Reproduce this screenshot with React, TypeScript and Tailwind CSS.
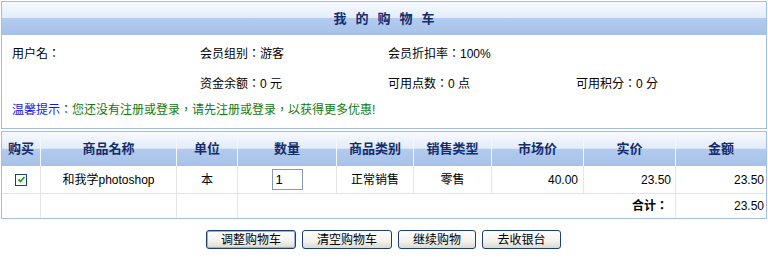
import React from "react";

const font = { fontFamily: '"Liberation Sans", "Noto Sans CJK TC", "Noto Sans CJK SC", sans-serif' };

function Check() {
  return (
    <span className="inline-flex h-[12px] w-[12px] items-center justify-center border border-[#1c3c78] bg-white">
      <svg width="9" height="9" viewBox="0 0 9 9">
        <path d="M1.5 4.5 L3.5 6.5 L7.5 2" stroke="#21a121" strokeWidth="1.8" fill="none" />
      </svg>
    </span>
  );
}

const headerBg =
  "bg-[linear-gradient(to_bottom,#f7faff_0%,#e3ecf9_48%,#b3cbee_50%,#a6c1e9_100%)]";

export default function App() {
  const cols = ["购买", "商品名称", "单位", "数量", "商品类别", "销售类型", "市场价", "实价", "金额"];
  const btns = [
    { t: "调整购物车", w: "w-[90px]", focus: true },
    { t: "清空购物车", w: "w-[90px]", focus: false },
    { t: "继续购物", w: "w-[78px]", focus: false },
    { t: "去收银台", w: "w-[79px]", focus: false },
  ];
  return (
    <div className="w-[768px] h-[261px] bg-white text-[12px] text-black" style={font}>
      <div className="pt-px pl-px">
        {/* top box */}
        <div className="w-[766px] h-[128px] border border-[#a4bde6] flex flex-col">
          <div className={`h-[33px] flex items-center justify-center gap-[9px] ${headerBg} text-[13px] font-bold text-[#142c6c]`}>
            <span>我</span><span>的</span><span>购</span><span>物</span><span>车</span>
          </div>
          <div className="grid grid-cols-[188px_188px_188px_188px] pl-[10px] h-[29px] items-end pb-[1px]">
            <div>用户名：</div>
            <div>会员组别：游客</div>
            <div>会员折扣率：100%</div>
            <div></div>
          </div>
          <div className="grid grid-cols-[188px_188px_188px_188px] pl-[10px] h-[30px] items-end pb-[1px]">
            <div></div>
            <div>资金余额：0 元</div>
            <div>可用点数：0 点</div>
            <div>可用积分：0 分</div>
          </div>
          <div className="pl-[10px] h-[27px] flex items-end pb-[2px]">
            <span className="text-[#1616e8]">温馨提示：</span>
            <span className="text-[#107a10]">您还没有注册或登录，请先注册或登录，以获得更多优惠!</span>
          </div>
        </div>

        {/* table */}
        <div className="mt-[2px] w-[766px] border border-[#a4bde6]">
          <div className={`grid grid-cols-[39px_136px_61px_99px_77px_78px_92px_92px_90px] h-[34px] ${headerBg}`}>
            {cols.map((c, i) => (
              <div
                key={c}
                className={`flex items-center justify-center text-[13px] font-bold text-[#142c6c] ${i < 8 ? "border-r border-[#f4f7fc]" : ""}`}
              >
                {c}
              </div>
            ))}
          </div>
          <div className="grid grid-cols-[39px_136px_61px_99px_77px_78px_92px_92px_90px] h-[28px] border-b border-[#e4e4e4]">
            <div className="flex items-center justify-center border-r border-[#e6e6e6]"><Check /></div>
            <div className="flex items-center justify-center border-r border-[#e6e6e6]">和我学photoshop</div>
            <div className="flex items-center justify-center border-r border-[#e6e6e6]">本</div>
            <div className="flex items-center justify-center border-r border-[#e6e6e6]">
              <div className="w-[31px] h-[21px] border border-[#7f9db9] bg-white flex items-center pl-[3px] text-[13px]">1</div>
            </div>
            <div className="flex items-center justify-center border-r border-[#e6e6e6]">正常销售</div>
            <div className="flex items-center justify-center border-r border-[#e6e6e6]">零售</div>
            <div className="flex items-center justify-end pr-[5px] border-r border-[#e6e6e6]">40.00</div>
            <div className="flex items-center justify-end pr-[4px] border-r border-[#e6e6e6]">23.50</div>
            <div className="flex items-center justify-end pr-[2px]">23.50</div>
          </div>
          <div className="grid grid-cols-[39px_136px_61px_99px_77px_78px_92px_92px_90px] h-[24px]">
            <div className="border-r border-[#e6e6e6]"></div>
            <div className="border-r border-[#e6e6e6]"></div>
            <div className="border-r border-[#e6e6e6]"></div>
            <div className="col-span-5 flex items-center justify-end pr-[7px] font-bold border-r border-[#e6e6e6]">合计：</div>
            <div className="flex items-center justify-end pr-[2px]">23.50</div>
          </div>
        </div>

        {/* buttons */}
        <div className="mt-[11px] flex justify-center gap-[6px] pr-[2px]">
          {btns.map((b) => (
            <button
              key={b.t}
              className={`${b.w} h-[19px] rounded-[3px] border border-[#1c3f73] bg-[linear-gradient(to_bottom,#ffffff_0%,#f3f2ec_60%,#dcd9cc_100%)] text-[12px] leading-none text-black ${b.focus ? "shadow-[inset_0_0_0_1px_#8fb0e8]" : ""}`}
              style={font}
            >
              {b.t}
            </button>
          ))}
        </div>
      </div>
    </div>
  );
}
